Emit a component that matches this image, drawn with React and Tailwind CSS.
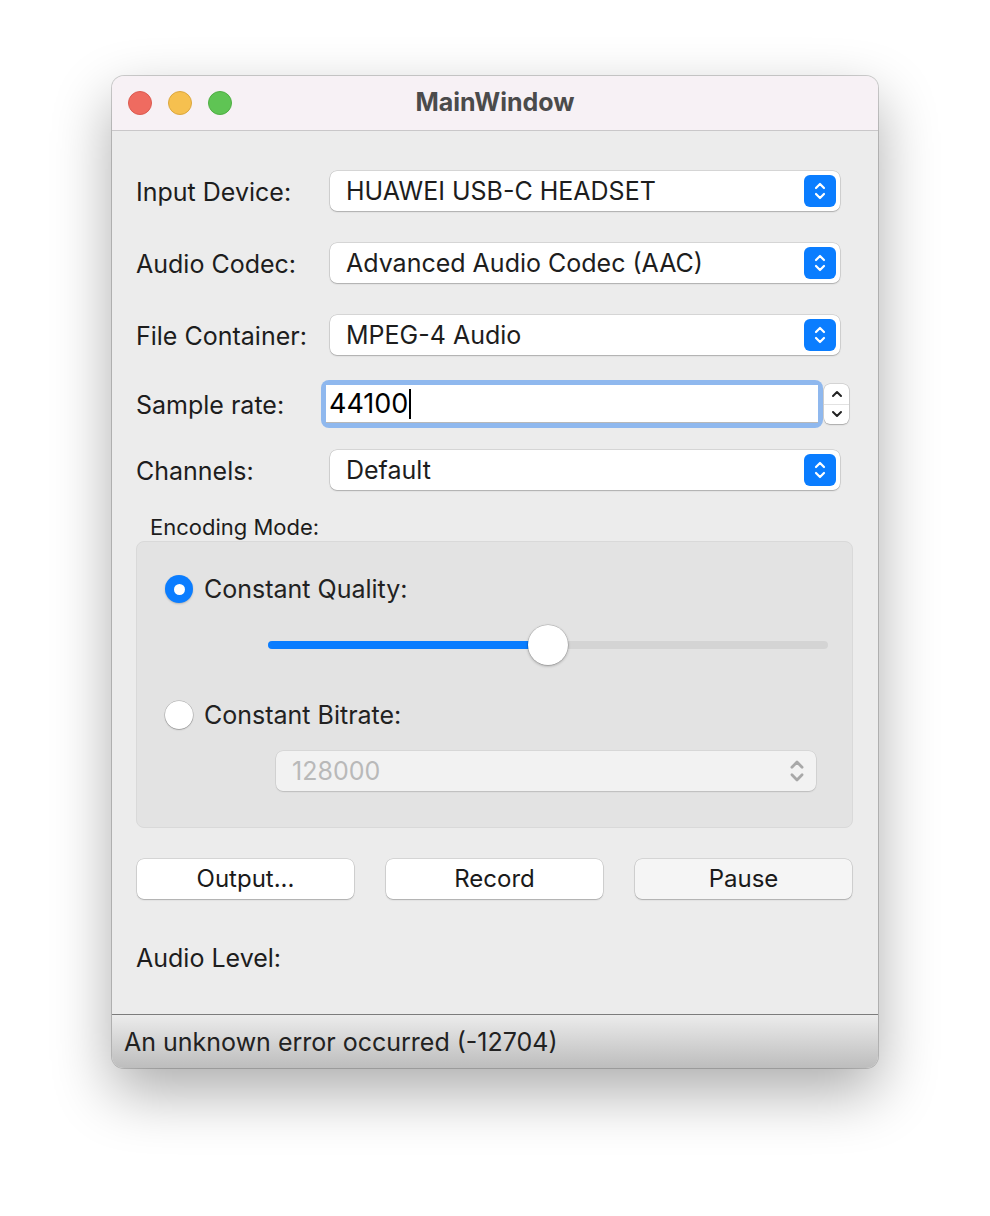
import React from "react";

const font = { fontFamily: "Inter, 'Noto Sans', sans-serif" };

function Chevrons({ color = "white", w = 14, h = 22 }) {
  return (
    <svg width={w} height={h} viewBox="0 0 14 22" fill="none">
      <path d="M3 8 L7 4 L11 8" stroke={color} strokeWidth="2.2" strokeLinecap="round" strokeLinejoin="round" />
      <path d="M3 14 L7 18 L11 14" stroke={color} strokeWidth="2.2" strokeLinecap="round" strokeLinejoin="round" />
    </svg>
  );
}

function Combo({ value }) {
  return (
    <div className="flex h-[40px] w-[510px] items-center justify-between rounded-[7px] bg-white pl-[16px] pr-[4px] shadow-[0_0_0_0.5px_rgba(0,0,0,0.18),0_1px_1.5px_rgba(0,0,0,0.2)]">
      <span className="pt-[1px] text-[25px] text-[#1d1d1d]">{value}</span>
      <div className="flex h-[32px] w-[32px] items-center justify-center rounded-[6px] bg-[#0a7dff]">
        <Chevrons />
      </div>
    </div>
  );
}

function Row({ label, children, className = "" }) {
  return (
    <div className={`flex h-[40px] items-center ${className}`}>
      <div className="w-[194px] pt-[4px] text-[25px] text-[#1d1d1d]">{label}</div>
      {children}
    </div>
  );
}

function Radio({ checked }) {
  if (checked) {
    return (
      <div className="flex h-[28px] w-[28px] items-center justify-center rounded-full bg-[#0b7dff] shadow-[0_1px_2px_rgba(0,0,0,0.2)]">
        <div className="h-[11px] w-[11px] rounded-full bg-white" />
      </div>
    );
  }
  return <div className="h-[28px] w-[28px] rounded-full bg-white shadow-[0_0_0_0.5px_rgba(0,0,0,0.25),0_1px_1.5px_rgba(0,0,0,0.2)]" />;
}

function Button({ children, dim }) {
  return (
    <div
      className={`flex h-[40px] w-[217px] items-center justify-center rounded-[7px] text-[24px] text-[#1a1a1a] shadow-[0_0_0_0.5px_rgba(0,0,0,0.18),0_1px_1.5px_rgba(0,0,0,0.2)] ${
        dim ? "bg-[#f5f5f5]" : "bg-white"
      }`}
    >
      {children}
    </div>
  );
}

export default function App() {
  return (
    <div className="min-h-[1216px] w-[990px] bg-white pt-[76px]" style={font}>
      <div className="ml-[112px] flex h-[992px] w-[766px] flex-col overflow-hidden rounded-[12px] bg-[#ececec] shadow-[0_0_0_1px_rgba(0,0,0,0.18),0_24px_60px_rgba(0,0,0,0.33)]">
        {/* Title bar */}
        <div className="relative flex h-[55px] shrink-0 items-center border-b border-[#c9c7c9] bg-[#f7f1f5]">
          <div className="flex gap-[16px] pl-[16px]">
            <div className="h-[24px] w-[24px] rounded-full border border-[#dc5a50] bg-[#ef6b60]" />
            <div className="h-[24px] w-[24px] rounded-full border border-[#dca73e] bg-[#f6c04f]" />
            <div className="h-[24px] w-[24px] rounded-full border border-[#4fae43] bg-[#5fc454]" />
          </div>
          <div className="absolute inset-0 flex items-center justify-center text-[25px] font-bold text-[#4b4b4b]">
            MainWindow
          </div>
        </div>

        {/* Body */}
        <div className="flex flex-1 flex-col px-[24px] pt-[40px]">
          <Row label="Input Device:">
            <Combo value="HUAWEI USB-C HEADSET" />
          </Row>
          <Row label="Audio Codec:" className="mt-[32px]">
            <Combo value="Advanced Audio Codec (AAC)" />
          </Row>
          <Row label="File Container:" className="mt-[32px]">
            <Combo value="MPEG-4 Audio" />
          </Row>
          <Row label="Sample rate:" className="mt-[29px]">
            <div className="-ml-[9px] flex items-center">
              <div className="h-[48px] w-[502px] rounded-[8px] bg-[#8fb8ee] p-[5px]">
                <div className="flex h-[38px] items-center border-b border-[#b8b8b8] bg-white pl-[3px]">
                  <span className="pt-[2px] text-[27px] text-black">44100</span>
                  <span className="ml-[1px] h-[30px] w-[2px] bg-black" />
                </div>
              </div>
              <div className="ml-[1px] flex h-[40px] w-[25px] flex-col overflow-hidden rounded-[6px] bg-white shadow-[0_0_0_0.5px_rgba(0,0,0,0.2),0_1px_1.5px_rgba(0,0,0,0.2)]">
                <div className="flex flex-1 items-center justify-center border-b border-[#e2e2e2]">
                  <svg width="12" height="8" viewBox="0 0 12 8" fill="none">
                    <path d="M2 6 L6 2 L10 6" stroke="#222" strokeWidth="2" strokeLinecap="round" strokeLinejoin="round" />
                  </svg>
                </div>
                <div className="flex flex-1 items-center justify-center">
                  <svg width="12" height="8" viewBox="0 0 12 8" fill="none">
                    <path d="M2 2 L6 6 L10 2" stroke="#222" strokeWidth="2" strokeLinecap="round" strokeLinejoin="round" />
                  </svg>
                </div>
              </div>
            </div>
          </Row>
          <Row label="Channels:" className="mt-[26px]">
            <Combo value="Default" />
          </Row>

          {/* Encoding mode group */}
          <div className="mt-[24px] pl-[14px] text-[22px] leading-[26px] text-[#1d1d1d]">Encoding Mode:</div>
          <div className="mt-[1px] flex h-[287px] w-[717px] flex-col rounded-[8px] border border-[#d9d9d9] bg-[#e3e3e3] pl-[28px]">
            <div className="mt-[33px] flex h-[28px] items-center">
              <Radio checked />
              <span className="ml-[11px] pt-[2px] text-[25px] text-[#222]">Constant Quality:</span>
            </div>
            <div className="relative ml-[103px] mt-[22px] flex h-[40px] w-[560px] items-center">
              <div className="h-[8px] w-full rounded-full bg-[#d4d4d4]" />
              <div className="absolute left-0 top-[16px] h-[8px] w-[280px] rounded-full bg-[#0a7dff]" />
              <div className="absolute left-[260px] top-0 h-[40px] w-[40px] rounded-full bg-white shadow-[0_0_0_0.5px_rgba(0,0,0,0.2),0_1px_3px_rgba(0,0,0,0.3)]" />
            </div>
            <div className="mt-[36px] flex h-[28px] items-center">
              <Radio />
              <span className="ml-[11px] pt-[2px] text-[25px] text-[#222]">Constant Bitrate:</span>
            </div>
            <div className="ml-[111px] mt-[22px] flex h-[40px] w-[540px] items-center justify-between rounded-[7px] bg-[#f2f2f2] pl-[16px] pr-[10px] shadow-[0_0_0_0.5px_rgba(0,0,0,0.1),0_1px_1.5px_rgba(0,0,0,0.12)]">
              <span className="pt-[2px] text-[25px] text-[#b9b9b9]">128000</span>
              <Chevrons color="#a8a8a8" w={18} h={28} />
            </div>
          </div>

          {/* Buttons */}
          <div className="mt-[31px] flex gap-[32px] pl-[1px]">
            <Button>Output...</Button>
            <Button>Record</Button>
            <Button dim>Pause</Button>
          </div>

          <div className="mt-[44px] text-[25px] leading-[30px] text-[#1d1d1d]">Audio Level:</div>
        </div>

        {/* Status bar */}
        <div className="flex h-[54px] shrink-0 items-center border-t border-[#7c7c7c] bg-gradient-to-b from-[#ececec] to-[#bdbdbd] pl-[12px] pt-[2px] text-[25px] text-[#222]">
          An unknown error occurred (-12704)
        </div>
      </div>
    </div>
  );
}
